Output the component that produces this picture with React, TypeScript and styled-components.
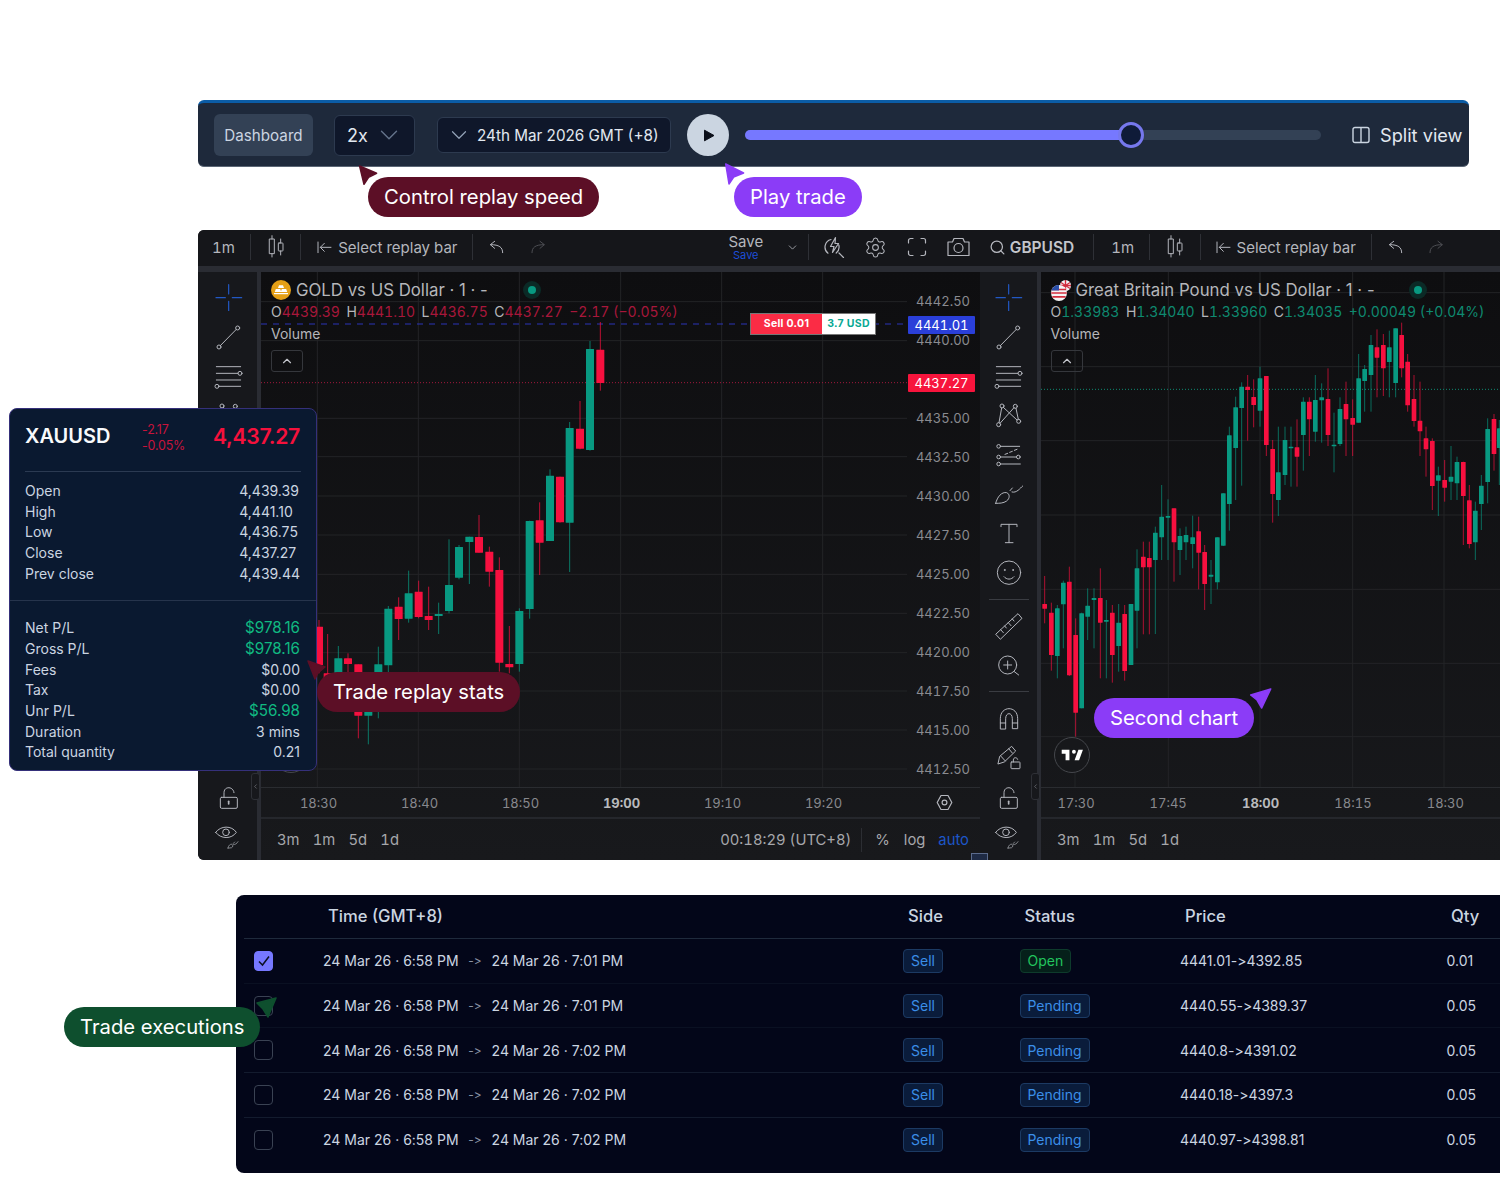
import React from "react";
import styled, { createGlobalStyle } from "styled-components";
import { ChevronDown, ChevronLeft, ChevronUp, Search, Settings } from "lucide-react";

const GlobalStyle = createGlobalStyle`
  html, body { margin: 0; padding: 0; background: #fff; }
  body { font-family: Inter, "Liberation Sans", sans-serif; }
  * { box-sizing: border-box; }
`;

const RED = "#f7103f";
const GREEN = "#089981";

type Candle = [number, number, number, number, number, "r" | "g"];

const GOLD: Candle[] = [
  [27, 870, 1030, 890, 1005, "r"], [53, 912, 1100, 1030, 1050, "r"], [85, 948, 1100, 985, 1060, "g"],
  [114, 970, 1100, 985, 1002, "r"], [145, 1003, 1225, 1003, 1157, "r"], [175, 1060, 1243, 1080, 1157, "g"],
  [205, 950, 1165, 1003, 1100, "g"], [235, 828, 1030, 836, 1006, "g"], [266, 802, 930, 830, 867, "r"],
  [296, 722, 878, 790, 866, "g"], [326, 752, 865, 785, 861, "r"], [356, 770, 900, 858, 870, "r"],
  [386, 818, 912, 852, 858, "g"], [417, 628, 850, 765, 843, "g"], [447, 645, 748, 651, 743, "g"],
  [478, 620, 762, 620, 636, "g"], [507, 555, 668, 621, 668, "r"], [538, 650, 770, 665, 725, "r"],
  [568, 682, 1025, 720, 998, "r"], [598, 888, 1030, 1002, 1012, "r"], [628, 835, 1025, 843, 1002, "g"],
  [659, 572, 866, 573, 837, "g"], [689, 517, 735, 571, 638, "r"], [720, 418, 633, 437, 633, "g"],
  [750, 440, 578, 440, 577, "r"], [779, 276, 726, 294, 578, "g"], [810, 213, 358, 296, 356, "r"],
  [840, 33, 362, 57, 360, "g"], [871, -24, 182, 59, 159, "r"],
];

const GBP: Candle[] = [
  [14, 768, 910, 852, 866, "r"], [34, 848, 1052, 878, 1005, "r"], [52, 855, 1075, 865, 1008, "g"],
  [70, 782, 985, 788, 853, "g"], [88, 740, 1068, 785, 1066, "r"], [107, 895, 1250, 945, 1178, "r"],
  [125, 878, 1165, 880, 1165, "g"], [143, 805, 960, 857, 890, "g"], [162, 805, 985, 834, 840, "g"],
  [181, 745, 1075, 834, 908, "r"], [199, 840, 1075, 900, 904, "g"], [217, 855, 1088, 878, 1005, "r"],
  [236, 852, 1055, 908, 978, "g"], [254, 855, 1082, 882, 1053, "r"], [273, 852, 1035, 852, 1035, "g"],
  [291, 688, 985, 745, 872, "g"], [310, 665, 943, 710, 742, "r"], [328, 665, 943, 714, 742, "r"],
  [346, 620, 942, 638, 720, "g"], [365, 495, 720, 590, 652, "g"], [384, 538, 720, 588, 592, "g"],
  [402, 565, 785, 565, 667, "r"], [420, 625, 765, 648, 690, "g"], [438, 620, 720, 645, 667, "g"],
  [458, 587, 745, 652, 672, "g"], [476, 590, 808, 634, 698, "r"], [494, 675, 870, 696, 792, "r"],
  [513, 720, 852, 764, 770, "g"], [532, 652, 808, 652, 787, "g"], [550, 520, 678, 520, 677, "g"],
  [568, 320, 632, 346, 552, "g"], [587, 230, 540, 262, 384, "g"], [605, 187, 497, 200, 264, "g"],
  [623, 165, 362, 200, 210, "r"], [641, 178, 322, 231, 255, "r"], [660, 140, 320, 175, 272, "g"],
  [679, 168, 408, 168, 375, "r"], [698, 360, 608, 387, 522, "r"], [715, 320, 588, 457, 540, "g"],
  [735, 320, 495, 360, 465, "g"], [753, 320, 500, 380, 384, "g"], [771, 298, 500, 382, 410, "r"],
  [790, 232, 452, 245, 345, "g"], [808, 232, 408, 245, 298, "r"], [826, 165, 365, 240, 335, "g"],
  [845, 190, 368, 232, 241, "g"], [864, 145, 378, 237, 345, "r"], [882, 278, 457, 374, 378, "g"],
  [900, 232, 378, 267, 372, "g"], [918, 185, 408, 252, 298, "r"], [938, 238, 408, 294, 314, "r"],
  [956, 102, 308, 175, 308, "g"], [974, 135, 275, 147, 183, "g"], [993, 45, 275, 75, 165, "g"],
  [1011, 28, 232, 82, 113, "r"], [1030, 42, 228, 75, 145, "r"], [1048, 32, 232, 82, 126, "g"],
  [1067, 25, 232, 25, 189, "g"], [1085, 8, 172, 45, 145, "r"], [1103, 102, 275, 125, 256, "r"],
  [1122, 165, 320, 237, 303, "r"], [1140, 185, 408, 302, 334, "r"], [1158, 320, 470, 355, 388, "r"],
  [1177, 355, 570, 363, 498, "r"], [1195, 440, 588, 466, 482, "g"], [1214, 420, 545, 480, 503, "r"],
  [1233, 378, 540, 470, 485, "g"], [1251, 410, 540, 426, 490, "g"], [1270, 425, 675, 426, 528, "r"],
  [1288, 495, 685, 541, 672, "r"], [1306, 545, 720, 572, 667, "g"], [1324, 465, 630, 497, 552, "g"],
  [1343, 295, 550, 327, 486, "g"], [1362, 282, 452, 297, 402, "r"], [1378, 300, 495, 325, 384, "g"],
];

const Page = styled.main`
  position: relative;
  width: 1500px;
  height: 1200px;
  padding-top: 100px;
  overflow: hidden;
  background: #fff;
`;

/* ---------- replay bar ---------- */
const ReplayBar = styled.section`
  display: flex;
  align-items: center;
  width: 1271px;
  height: 67px;
  margin-left: 198px;
  padding: 1px 0 0 16px;
  background: #1e293b;
  border-top: 3px solid #0b5ca6;
  border-bottom: 1px solid #5b6675;
  border-radius: 6px;
  color: #e2e8f0;
`;
const DashboardButton = styled.button`
  width: 99px;
  height: 42px;
  padding: 0;
  border: 0;
  border-radius: 6px;
  background: #334155;
  color: #cbd5e1;
  font: 400 15.2px Inter, sans-serif;
`;
const Picker = styled.div<{ $w: number; $h: number; $ml: number; $size: number; $pad: number; $gap: number }>`
  display: flex;
  align-items: center;
  width: ${(p) => p.$w}px;
  height: ${(p) => p.$h}px;
  margin-left: ${(p) => p.$ml}px;
  padding-left: ${(p) => p.$pad}px;
  gap: ${(p) => p.$gap}px;
  border: 1px solid #2d3a4f;
  border-radius: 6px;
  background: #0f172a;
  font-size: ${(p) => p.$size}px;
  white-space: nowrap;
`;
const PlayButton = styled.button`
  display: flex;
  align-items: center;
  justify-content: center;
  width: 42px;
  height: 42px;
  margin-left: 16px;
  padding: 0 0 0 1px;
  border: 0;
  border-radius: 50%;
  background: #cbd5e1;
`;
const SliderTrack = styled.div`
  position: relative;
  width: 576px;
  height: 10px;
  margin-left: 16px;
  border-radius: 5px;
  background: #334155;
`;
const SliderFill = styled.div`
  height: 100%;
  border-radius: 5px;
  background: #7678ff;
`;
const SliderThumb = styled.div`
  position: absolute;
  top: 50%;
  width: 26px;
  height: 26px;
  border: 3px solid #7678ed;
  border-radius: 50%;
  background: #0f1b38;
  transform: translate(-50%, -50%);
`;
const SplitView = styled.div`
  display: flex;
  align-items: center;
  gap: 10px;
  margin-left: 31px;
  font-size: 18.2px;
  white-space: nowrap;
`;

/* ---------- chart workspace ---------- */
const Workspace = styled.section`
  display: flex;
  flex-direction: column;
  width: 1340px;
  height: 630px;
  margin: 63px 0 0 198px;
  border-radius: 6px 0 0 6px;
  overflow: hidden;
  background: #2a2c33;
`;
const Toolbar = styled.div`
  display: flex;
  align-items: center;
  flex: none;
  height: 36px;
  margin-bottom: 6px;
  padding: 0 0 2px 14px;
  background: #15161a;
  color: #b4b6bd;
  font-size: 15px;
  font-variant-numeric: tabular-nums;
  white-space: nowrap;
`;
const ToolDivider = styled.span<{ $ml: number }>`
  flex: none;
  width: 1px;
  height: 26px;
  margin-left: ${(p) => p.$ml}px;
  background: #2e3036;
`;
const ToolSlot = styled.span<{ $ml?: number; $dim?: boolean }>`
  display: inline-flex;
  align-items: center;
  flex: none;
  margin-left: ${(p) => p.$ml ?? 0}px;
  opacity: ${(p) => (p.$dim ? 0.35 : 1)};
`;
const SaveStack = styled.span<{ $ml: number }>`
  display: flex;
  flex-direction: column;
  align-items: center;
  flex: none;
  width: 34px;
  margin-left: ${(p) => p.$ml}px;
  font-size: 15px;
  line-height: 16px;
`;
const SaveHint = styled.span`
  color: #1d4ed8;
  font-size: 11px;
  line-height: 11px;
`;
const Symbol = styled.strong`
  margin-left: 4px;
  color: #c4c6cc;
  font-size: 15.5px;
  font-weight: 600;
`;
const Panes = styled.div`
  display: flex;
  flex: 1;
  gap: 4px;
  min-height: 0;
`;
const PaneGroup = styled.div`
  display: flex;
  flex: none;
`;
const Sidebar = styled.nav<{ $w: number; $inset: number }>`
  position: relative;
  display: flex;
  flex-direction: column;
  align-items: center;
  flex: none;
  width: ${(p) => p.$w}px;
  padding: 6px 0 0 ${(p) => p.$inset}px;
  background: #17181c;
`;
const SideTool = styled.span`
  display: flex;
  align-items: center;
  justify-content: center;
  flex: none;
  width: 100%;
  height: 39.3px;
`;
const SideRule = styled.hr`
  flex: none;
  width: 40px;
  height: 1px;
  margin: 6.5px 0;
  border: 0;
  background: #3a3c42;
`;
const CollapseTab = styled.span`
  position: absolute;
  top: 501px;
  right: -3px;
  z-index: 2;
  display: flex;
  align-items: center;
  justify-content: center;
  width: 9px;
  height: 27px;
  border: 1px solid #2e3036;
  border-radius: 3px;
  background: #17181c;
  color: #8a8c92;
`;
const ToolSvg = styled.svg<{ $tint?: string; $thin?: boolean }>`
  flex: none;
  fill: none;
  stroke: ${(p) => p.$tint ?? "#b4b6bd"};
  stroke-width: ${(p) => (p.$thin ? 1.2 : 3)};
  stroke-linecap: round;
  stroke-linejoin: round;
`;
const ChartPane = styled.div<{ $w?: number }>`
  display: flex;
  flex-direction: column;
  position: relative;
  flex: ${(p) => (p.$w ? "none" : "1")};
  width: ${(p) => (p.$w ? `${p.$w}px` : "auto")};
  background: linear-gradient(180deg, #0e0e10 0%, #18191c 100%);
`;
const PlotRow = styled.div`
  display: flex;
  flex: none;
  height: 515px;
`;
const Plot = styled.div`
  position: relative;
  flex: 1;
  min-width: 0;
`;
const ChartSvg = styled.svg`
  position: absolute;
  inset: 0;
`;
const PriceAxis = styled.div`
  position: relative;
  flex: none;
  width: 73px;
  padding-top: 9.5px;
`;
const PriceTick = styled.div`
  height: 39px;
  padding-right: 10px;
  color: #8a8b90;
  font-size: 13px;
  font-variant-numeric: tabular-nums;
  line-height: 39px;
  text-align: right;
`;
const PriceTag = styled.span<{ $top: number; $bg: string }>`
  position: absolute;
  top: ${(p) => p.$top}px;
  left: 1px;
  width: 67px;
  height: 18.5px;
  border-radius: 1px;
  background: ${(p) => p.$bg};
  color: #fff;
  font-size: 13px;
  font-variant-numeric: tabular-nums;
  line-height: 18.5px;
  text-align: center;
`;
const Legend = styled.div<{ $left: number }>`
  position: absolute;
  top: 8px;
  left: ${(p) => p.$left}px;
  display: flex;
  flex-direction: column;
`;
const LegendTitle = styled.div`
  display: flex;
  align-items: center;
  height: 20px;
  gap: 4px;
  color: #b5b6ba;
  font-size: 16.8px;
  white-space: nowrap;
`;
const GoldName = styled.span`
  margin-left: 1px;
`;
const MarketDot = styled.span<{ $ml: number }>`
  display: flex;
  align-items: center;
  justify-content: center;
  width: 18px;
  height: 18px;
  margin-left: ${(p) => p.$ml}px;
  border-radius: 50%;
  background: #0b2a26;
  &::after {
    content: "";
    width: 8px;
    height: 8px;
    border-radius: 50%;
    background: #089981;
  }
`;
const Ohlc = styled.div`
  display: flex;
  gap: 6.5px;
  height: 16px;
  margin-top: 3.5px;
  color: #b5b6ba;
  font-size: 14px;
  font-variant-numeric: tabular-nums;
  line-height: 16px;
  white-space: nowrap;
`;
const OhlcValue = styled.span<{ $tone: string }>`
  color: ${(p) => p.$tone};
`;
const VolumeLabel = styled.div`
  height: 18px;
  margin-top: 5px;
  color: #b5b6ba;
  font-size: 14px;
  line-height: 18px;
`;
const CollapseButton = styled.button`
  display: flex;
  align-items: center;
  justify-content: center;
  width: 32px;
  height: 22px;
  margin-top: 7px;
  padding: 0;
  border: 1px solid #35373c;
  border-radius: 3px;
  background: transparent;
  color: #c4c6cc;
`;
const SellTag = styled.div`
  position: absolute;
  top: 41px;
  left: 489px;
  display: flex;
  width: 126px;
  height: 22px;
  border: 1px solid #777;
  font-size: 10.5px;
  font-weight: 700;
  line-height: 20px;
  letter-spacing: 0.3px;
  text-align: center;
`;
const SellPart = styled.span`
  width: 71px;
  background: #fb2c45;
  color: #fff;
`;
const SellValue = styled.span`
  flex: 1;
  background: #fff;
  color: #08a893;
`;
const TvBadge = styled.div<{ $left: number }>`
  position: absolute;
  top: 465px;
  left: ${(p) => p.$left}px;
  display: flex;
  align-items: center;
  justify-content: center;
  width: 36px;
  height: 36px;
  border: 1px solid #45474c;
  border-radius: 50%;
  background: #17181b;
`;
const TimeAxis = styled.div<{ $pad: number }>`
  display: flex;
  align-items: center;
  position: relative;
  flex: none;
  height: 30px;
  padding-left: ${(p) => p.$pad}px;
  border-top: 1px solid #2a2c30;
  overflow: hidden;
`;
const TimeTick = styled.span<{ $w: number; $bold?: boolean; $ml?: number }>`
  flex: none;
  width: ${(p) => p.$w}px;
  margin-left: ${(p) => p.$ml ?? 0}px;
  color: ${(p) => (p.$bold ? "#b9babd" : "#88898e")};
  font-size: 13px;
  font-variant-numeric: tabular-nums;
  font-weight: ${(p) => (p.$bold ? 700 : 400)};
  text-align: center;
`;
const AxisGear = styled.span`
  position: absolute;
  right: 27px;
  display: flex;
`;
const RangeBar = styled.div`
  position: relative;
  display: flex;
  align-items: center;
  flex: 1;
  padding-left: 16px;
  border-top: 2px solid #25272c;
  color: #a6a7ab;
  font-size: 14.8px;
  font-variant-numeric: tabular-nums;
  white-space: nowrap;
`;
const Ranges = styled.div`
  display: flex;
  gap: 13.2px;
`;
const RangeRight = styled.div`
  display: flex;
  align-items: center;
  margin-left: auto;
  padding-right: 11px;
`;
const RangeRule = styled.span`
  width: 1px;
  height: 24px;
  margin: 0 13px 0 10px;
  background: #2c2e33;
`;
const RangeLink = styled.span<{ $blue?: boolean; $ml?: number }>`
  margin-left: ${(p) => p.$ml ?? 0}px;
  color: ${(p) => (p.$blue ? "#1d56c8" : "#a6a7ab")};
`;
const CornerChip = styled.span`
  position: absolute;
  right: -8px;
  bottom: 0;
  z-index: 2;
  width: 17px;
  height: 7px;
  border: 1px solid #5b6b8c;
  border-bottom: 0;
  background: #1e2a44;
`;

/* ---------- stats panel ---------- */
const StatsPanel = styled.aside`
  position: absolute;
  top: 408px;
  left: 9px;
  width: 308px;
  height: 363px;
  border: 1px solid #35307a;
  border-radius: 8px;
  background: #0a1930;
  color: #cbd5e1;
  font-size: 14px;
`;
const StatsHead = styled.header`
  display: flex;
  align-items: center;
  height: 62px;
  padding: 0 16px 8px 15px;
`;
const StatsSymbol = styled.strong`
  width: 117px;
  color: #f8fafc;
  font-size: 20px;
  font-weight: 600;
`;
const StatsChange = styled.span`
  margin-top: 4px;
  color: #c8143c;
  font-size: 12.5px;
  line-height: 16px;
  letter-spacing: -0.2px;
`;
const StatsPrice = styled.strong`
  margin-left: auto;
  color: #f5113c;
  font-size: 21.2px;
  font-weight: 600;
  letter-spacing: -0.3px;
`;
const HeadRule = styled.hr`
  height: 1px;
  margin: 0 15px;
  border: 0;
  background: #2b3a52;
`;
const FullRule = styled.hr`
  height: 1px;
  margin: 0;
  border: 0;
  background: #26344c;
`;
const StatsGroup = styled.dl<{ $top: number; $bottom: number }>`
  display: grid;
  grid-template-columns: 1fr auto;
  grid-auto-rows: 20.7px;
  align-items: center;
  margin: 0;
  padding: ${(p) => p.$top}px 16px ${(p) => p.$bottom}px 15px;
`;
const StatsLabel = styled.dt``;
const StatsValue = styled.dd<{ $right?: boolean; $pos?: boolean }>`
  margin: 0;
  color: ${(p) => (p.$pos ? "#10b981" : "#cbd5e1")};
  font-size: ${(p) => (p.$pos ? 15.2 : 14)}px;
  text-align: ${(p) => (p.$right ? "right" : "left")};
`;

/* ---------- table ---------- */
const TradeTable = styled.section`
  width: 1300px;
  height: 278px;
  margin: 35px 0 0 236px;
  padding-left: 8px;
  border-radius: 8px;
  background: #030619;
  color: #cbd5e1;
`;
const HeaderRow = styled.div`
  display: grid;
  grid-template-columns: 79px 580px 116.5px 160.5px 266px 1fr;
  align-items: center;
  height: 44px;
  padding-bottom: 2px;
  border-bottom: 1px solid #1f2a3c;
  font-size: 16.6px;
  font-weight: 500;
`;
const HeaderCell = styled.span`
  padding-left: 5px;
`;
const TradeRow = styled.div<{ $line: string }>`
  display: grid;
  grid-template-columns: 79px 580px 116.5px 160.5px 266.5px 1fr;
  align-items: center;
  height: 44.7px;
  border-bottom: 1px solid ${(p) => p.$line};
  font-size: 14px;
  font-feature-settings: "calt" 0;
`;
const CheckBox = styled.span<{ $on?: boolean }>`
  display: flex;
  align-items: center;
  justify-content: center;
  width: 19px;
  height: 20px;
  margin-left: 10px;
  border: 1px solid ${(p) => (p.$on ? "#7678ff" : "#3a4253")};
  border-radius: 4px;
  background: ${(p) => (p.$on ? "#7678ff" : "transparent")};
`;
const TimeCell = styled.span`
  display: flex;
  align-items: center;
  white-space: nowrap;
`;
const TimeArrow = styled.span`
  width: 33px;
  color: #8a93a5;
  font-size: 12px;
  text-align: center;
`;
const Badge = styled.span<{ $tone: "blue" | "green" }>`
  display: inline-flex;
  align-items: center;
  justify-self: start;
  height: 24px;
  padding: 0 7px;
  border: 1px solid ${(p) => (p.$tone === "green" ? "#0e3b2c" : "#1c3a63")};
  border-radius: 4px;
  background: ${(p) => (p.$tone === "green" ? "#05201a" : "#0a1c3b")};
  color: ${(p) => (p.$tone === "green" ? "#22c55e" : "#3b8ee8")};
`;

/* ---------- callouts ---------- */
const Callout = styled.div<{ $x: number; $y: number; $bg: string }>`
  position: absolute;
  top: ${(p) => p.$y}px;
  left: ${(p) => p.$x}px;
  z-index: 5;
  height: 40px;
  padding: 0 16px;
  border-radius: 20px;
  background: ${(p) => p.$bg};
  color: #fff;
  font-size: 20.25px;
  line-height: 40px;
  white-space: nowrap;
`;
const PointerSvg = styled.svg<{ $x: number; $y: number }>`
  position: absolute;
  top: ${(p) => p.$y}px;
  left: ${(p) => p.$x}px;
  z-index: 5;
`;

const Pointer = ({ x, y, color, pts }: { x: number; y: number; color: string; pts: string }) => (
  <PointerSvg $x={x} $y={y} width={26} height={26} viewBox="0 0 26 26">
    <polygon points={pts} fill={color} stroke={color} strokeWidth={1.5} strokeLinejoin="round" />
  </PointerSvg>
);

const ZIcon = ({ b, c, children }: { b: [number, number, number, number]; c?: string; children: React.ReactNode }) => (
  <ToolSvg viewBox={b.join(" ")} width={b[2] / 3} height={b[3] / 3} $tint={c}>
    {children}
  </ToolSvg>
);

const CandleIcon = () => (
  <ZIcon b={[205, 22, 55, 72]}>
    <rect x={213} y={34} width={14} height={44} />
    <path d="M220 24v10M220 78v10" />
    <rect x={239} y={46} width={14} height={24} rx={2} />
    <path d="M246 34v12M246 70v12" />
  </ZIcon>
);
const ReplayIcon = () => (
  <ZIcon b={[352, 34, 54, 44]}>
    <path d="M361 40v32M400 56h-32M380 44l-12 12 12 12" />
  </ZIcon>
);
const UndoIcon = ({ flip }: { flip?: boolean }) => (
  <ZIcon b={[872, 34, 50, 44]}>
    <path transform={flip ? "matrix(-1 0 0 1 1794 0)" : undefined} d="M916 72c0-16-10-24-36-24M892 38l-13 10 13 11" />
  </ZIcon>
);

const ChartTools = ({ first, replay }: { first: number; replay: number }) => (
  <>
    {first ? <ToolDivider $ml={first} /> : null}
    <ToolSlot $ml={first ? 17 : 0}>1m</ToolSlot>
    <ToolDivider $ml={15} />
    <ToolSlot $ml={16}>
      <CandleIcon />
    </ToolSlot>
    <ToolDivider $ml={15} />
    <ToolSlot $ml={replay}>
      <ReplayIcon />
    </ToolSlot>
    <ToolSlot $ml={5}>Select replay bar</ToolSlot>
    <ToolDivider $ml={15} />
    <ToolSlot $ml={15}>
      <UndoIcon />
    </ToolSlot>
    <ToolSlot $ml={25} $dim>
      <UndoIcon flip />
    </ToolSlot>
  </>
);

const PlainIcon = ({ w, h, vb, children }: { w: number; h: number; vb: string; children: React.ReactNode }) => (
  <ToolSvg viewBox={vb} width={w} height={h} $thin>
    {children}
  </ToolSvg>
);

const LockIcon = () => (
  <ZIcon b={[112, 1155, 66, 76]}>
    <rect x={119} y={1192} width={51} height={33} rx={4} />
    <path d="M130 1192v-14c0-20 28-20 30 0" />
    <path d="M144 1204v8" strokeWidth={5} />
  </ZIcon>
);
const EyeIcon = () => (
  <ZIcon b={[105, 1275, 85, 78]}>
    <path d="M110 1300c15-21 48-21 62 0-14 21-47 21-62 0Z" />
    <circle cx={141} cy={1300} r={10} />
    <path d="M147 1347c1-7 7-13 12-11 4 2 3 8-1 10-3 1-7 1-11 1ZM163 1333l4-4M163 1336c6 2 10-2 14-8" strokeWidth={2} />
  </ZIcon>
);

const ToolColumn = ({ w, inset }: { w: number; inset: number }) => (
  <Sidebar $w={w} $inset={inset}>
    <SideTool>
      <ZIcon b={[52, 170, 84, 82]} c="#2258c4">
        <path d="M93 172v28M93 222v28M55 211h28M104 211h28" strokeWidth={3.6} />
      </ZIcon>
    </SideTool>
    <SideTool>
      <ZIcon b={[52, 286, 80, 80]}>
        <path d="M68 351l48-49" />
        <circle cx={64} cy={355} r={6} />
        <circle cx={120} cy={298} r={6} />
      </ZIcon>
    </SideTool>
    <SideTool>
      <ZIcon b={[45, 405, 92, 76]}>
        <path d="M55 413h73M55 433h65M55 453h73M63 472h65" />
        <circle cx={126} cy={433} r={6} />
        <circle cx={57} cy={472} r={6} />
      </ZIcon>
    </SideTool>
    <SideTool>
      <ZIcon b={[105, 7, 80, 80]}>
        <path d="M130 23l41 38M162 24l-42 47M125 25l-8 44M168 26l7 33" />
        <circle cx={126} cy={19} r={6} />
        <circle cx={166} cy={20} r={6} />
        <circle cx={116} cy={75} r={6} />
        <circle cx={176} cy={65} r={6} />
      </ZIcon>
    </SideTool>
    <SideTool>
      <ZIcon b={[102, 130, 84, 72]}>
        <path d="M119 140h57M119 172h47M119 193h59" />
        <path d="M132 164l8-3M146 158l8-3M160 152l8-3" />
        <circle cx={113} cy={140} r={5.5} />
        <circle cx={113} cy={172} r={5.5} />
        <circle cx={113} cy={193} r={5.5} />
        <circle cx={172} cy={172} r={5.5} />
      </ZIcon>
    </SideTool>
    <SideTool>
      <ZIcon b={[102, 252, 90, 62]}>
        <path d="M107 310c5-20 18-35 33-32 10 4 10 17 0 25-10 7-22 7-33 7ZM150 272l7-8M156 276c14 4 24-11 32-18" />
      </ZIcon>
    </SideTool>
    <SideTool>
      <ZIcon b={[116, 368, 60, 68]}>
        <path d="M122 382v-7h48v7M146 375v55M135 430h23" />
      </ZIcon>
    </SideTool>
    <SideTool>
      <ZIcon b={[106, 480, 78, 78]}>
        <circle cx={145} cy={518} r={35} />
        <circle cx={132} cy={510} r={1.5} />
        <circle cx={157} cy={510} r={1.5} />
        <path d="M130 530c8 10 22 10 30 0" />
      </ZIcon>
    </SideTool>
    <SideRule />
    <SideTool>
      <ZIcon b={[100, 636, 90, 86]}>
        <path d="M106 702l66-61 12 14-64 62ZM120 689l8 9M132 678l5 6M143 668l8 9M155 657l5 6" />
      </ZIcon>
    </SideTool>
    <SideTool>
      <ZIcon b={[108, 760, 70, 68]}>
        <circle cx={140} cy={793} r={27} />
        <path d="M160 813l13 10M140 781v24M128 793h24" />
      </ZIcon>
    </SideTool>
    <SideRule />
    <SideTool>
      <ZIcon b={[112, 920, 66, 70]}>
        <path d="M119 985v-30c0-40 52-40 52 0v30h-16v-30c0-20-20-20-20 0v30ZM119 968h16M155 968h16" />
      </ZIcon>
    </SideTool>
    <SideTool>
      <ZIcon b={[104, 1034, 78, 76]}>
        <path d="M110 1090l5-22 36-30 12 14-33 32ZM119 1068l13 14M142 1045l11 13" />
        <rect x={149} y={1085} width={27} height={20} rx={2} />
        <path d="M156 1085v-6c0-9 12-9 13-2" />
      </ZIcon>
    </SideTool>
    <SideTool>
      <LockIcon />
    </SideTool>
    <SideTool>
      <EyeIcon />
    </SideTool>
    <CollapseTab>
      <ChevronLeft size={9} strokeWidth={2} />
    </CollapseTab>
  </Sidebar>
);

const Candles = ({ data, body, wick }: { data: Candle[]; body: number; wick: number }) => (
  <>
    {data.map(([x, wt, wb, bt, bb, c]) => {
      const color = c === "r" ? RED : GREEN;
      return (
        <g key={x}>
          <line x1={x} x2={x} y1={wt} y2={wb} stroke={color} strokeWidth={wick} opacity={0.75} />
          <rect x={x - body / 2} y={bt} width={body} height={Math.max(bb - bt, 5)} fill={color} rx={1} />
        </g>
      );
    })}
  </>
);

const GoldChart = () => (
  <ChartSvg viewBox="-147 -174 1938 1545" width={646} height={515}>
    {[32, 265, 380, 498, 615, 733, 850, 968, 1083, 1200, 1317, -85].map((y) => (
      <line key={y} x1={-147} x2={1791} y1={y} y2={y} stroke="#232427" strokeWidth={3} />
    ))}
    {[22, 325, 628, 932, 1235, 1538].map((x) => (
      <line key={x} x1={x} x2={x} y1={-174} y2={1371} stroke="#232427" strokeWidth={3} />
    ))}
    <line x1={-147} x2={1791} y1={-18} y2={-18} stroke="#2a34b8" strokeWidth={3} strokeDasharray="18 18" />
    <line x1={-147} x2={1791} y1={158} y2={158} stroke="#a0183c" strokeWidth={3} strokeDasharray="3 6" />
    <Candles data={GOLD} body={24} wick={3} />
  </ChartSvg>
);

const GbpChart = () => (
  <ChartSvg viewBox="3 -144 1380 1545" width={460} height={515}>
    {[-82, 140, 362, 585, 808, 1030, 1250].map((y) => (
      <line key={y} x1={3} x2={1383} y1={y} y2={y} stroke="#232427" strokeWidth={3} />
    ))}
    {[105, 385, 660, 938, 1212].map((x) => (
      <line key={x} x1={x} x2={x} y1={-144} y2={1401} stroke="#232427" strokeWidth={3} />
    ))}
    <line x1={3} x2={1383} y1={208} y2={208} stroke="#0f8a72" strokeWidth={3} strokeDasharray="3 6" />
    <Candles data={GBP} body={14} wick={2.7} />
  </ChartSvg>
);

const GoldMark = () => (
  <svg width={20} height={20} viewBox="0 0 20 20">
    <circle cx={10} cy={10} r={10} fill="#e5a016" />
    <path d="M8 5.2h4l1 2.8H7ZM4.8 9h4.4l1 3H3.8ZM10.8 9h4.4l1 3h-6.4Z" fill="#fff" />
    <rect x={3} y={13} width={14} height={1.2} fill="#fff" />
  </svg>
);
const FlagMark = () => (
  <svg width={21} height={21} viewBox="0 0 21 21">
    <circle cx={14.5} cy={5.5} r={5.5} fill="#f3f4f6" />
    <path d="M10 2.5l9 6M19 2.5l-9 6" stroke="#cf2b3c" strokeWidth={1.2} />
    <path d="M14.5 0v11M9 5.5h11" stroke="#cf2b3c" strokeWidth={1.4} />
    <circle cx={8} cy={13} r={8} fill="#f4f4f5" />
    <path d="M1 9.5h14M.2 13h15.6M1.4 16.8h13.2" stroke="#d22f3f" strokeWidth={1.7} />
    <path d="M8 5a8 8 0 0 0-7.5 5.5H8Z" fill="#2a4ea8" />
  </svg>
);
const TvLogo = () => (
  <svg width={24} height={18} viewBox="0 0 36 28" fill="#fff">
    <path d="M14 6H2v6h6v10h6V6Zm8 16 6-16h7l-6 16h-7Zm-1-10a3 3 0 1 0 0-6 3 3 0 0 0 0 6Z" />
  </svg>
);

/* 4437.50 sits under the live price tag in the reference, so its row stays empty. */
const PRICES = ["4442.50", "4440.00", "", "4435.00", "4432.50", "4430.00", "4427.50", "4425.00", "4422.50", "4420.00", "4417.50", "4415.00", "4412.50"];
const STATS_A: [string, string][] = [
  ["Open", "4,439.39"], ["High", "4,441.10"], ["Low", "4,436.75"], ["Close", "4,437.27"], ["Prev close", "4,439.44"],
];
const STATS_B: [string, string, boolean][] = [
  ["Net P/L", "$978.16", true], ["Gross P/L", "$978.16", true], ["Fees", "$0.00", false], ["Tax", "$0.00", false],
  ["Unr P/L", "$56.98", true], ["Duration", "3 mins", false], ["Total quantity", "0.21", false],
];
const TRADES: [string, string, string, string, string][] = [
  ["7:01 PM", "Open", "4441.01->4392.85", "0.01", "#0a1022"],
  ["7:01 PM", "Pending", "4440.55->4389.37", "0.05", "#0a1022"],
  ["7:02 PM", "Pending", "4440.8->4391.02", "0.05", "#131b2e"],
  ["7:02 PM", "Pending", "4440.18->4397.3", "0.05", "#131b2e"],
  ["7:02 PM", "Pending", "4440.97->4398.81", "0.05", "transparent"],
];
const REPLAY_PROGRESS = 67.1;

export default function App() {
  return (
    <Page>
      <GlobalStyle />
      <ReplayBar>
        <DashboardButton>Dashboard</DashboardButton>
        <Picker $w={81} $h={41} $ml={21} $size={18} $pad={12} $gap={6}>
          2x
          <ChevronDown size={30} color="#64748b" strokeWidth={1.1} />
        </Picker>
        <Picker $w={234} $h={36} $ml={22} $size={15.25} $pad={8} $gap={5}>
          <ChevronDown size={26} color="#94a3b8" strokeWidth={1.1} />
          24th Mar 2026 GMT (+8)
        </Picker>
        <PlayButton aria-label="Play">
          <svg width={12} height={13} viewBox="0 0 12 13">
            <path d="M1.5 1.2 11 6.5 1.5 11.8Z" fill="#0b0f19" stroke="#0b0f19" strokeLinejoin="round" />
          </svg>
        </PlayButton>
        <SliderTrack>
          <SliderFill style={{ width: `${REPLAY_PROGRESS}%` }} />
          <SliderThumb style={{ left: `${REPLAY_PROGRESS}%` }} />
        </SliderTrack>
        <SplitView>
          <svg width={18} height={18} viewBox="0 0 18 18" fill="none" stroke="#cbd5e1" strokeWidth={1.4}>
            <rect x={1} y={1.5} width={16} height={15} rx={2} />
            <path d="M9 1.5v15" />
          </svg>
          Split view
        </SplitView>
      </ReplayBar>

      <Workspace>
        <Toolbar>
          <ChartTools first={0} replay={14} />
          <SaveStack $ml={182}>
            Save
            <SaveHint>Save</SaveHint>
          </SaveStack>
          <ToolSlot $ml={23}>
            <ChevronDown size={13} strokeWidth={1.5} />
          </ToolSlot>
          <ToolDivider $ml={9} />
          <ToolSlot $ml={14}>
            <PlainIcon w={22} h={22} vb="0 0 22 22">
              <path d="M8 3.5A7.8 7.8 0 0 0 5 17.2M15.8 9a7.8 7.8 0 0 1-2.6 8M16 17l4.5 4.5M12.5 1.5 7.5 10.5h3.5l-1.5 6 6-9h-3.5Z" />
            </PlainIcon>
          </ToolSlot>
          <ToolSlot $ml={19}>
            <Settings size={23} strokeWidth={1.1} />
          </ToolSlot>
          <ToolSlot $ml={20}>
            <PlainIcon w={20} h={20} vb="0 0 20 20">
              <path d="M1.5 6V3.5a2 2 0 0 1 2-2H6M14 1.5h2.5a2 2 0 0 1 2 2V6M18.5 14v2.5a2 2 0 0 1-2 2H14M6 18.5H3.5a2 2 0 0 1-2-2V14" />
            </PlainIcon>
          </ToolSlot>
          <ToolSlot $ml={20}>
            <PlainIcon w={23} h={20} vb="0 0 23 20">
              <path d="M1 5h4.5l1.5-3.5h9L17.5 5H22v13.5H1Z" />
              <circle cx={11.5} cy={11} r={4.5} />
            </PlainIcon>
          </ToolSlot>
          <ToolSlot $ml={19}>
            <Search size={17} strokeWidth={1.8} />
          </ToolSlot>
          <Symbol>GBPUSD</Symbol>
          <ChartTools first={19} replay={13} />
        </Toolbar>

        <Panes>
          <ToolColumn w={59} inset={2} />
          <PaneGroup>
            <ChartPane $w={719}>
              <PlotRow>
                <Plot>
                  <GoldChart />
                  <Legend $left={10}>
                    <LegendTitle>
                      <GoldMark />
                      <GoldName>GOLD vs US Dollar · 1 · -</GoldName>
                      <MarketDot $ml={31} />
                    </LegendTitle>
                    <Ohlc>
                      <span>O<OhlcValue $tone="#a8173b">4439.39</OhlcValue></span>
                      <span>H<OhlcValue $tone="#a8173b">4441.10</OhlcValue></span>
                      <span>L<OhlcValue $tone="#a8173b">4436.75</OhlcValue></span>
                      <span>C<OhlcValue $tone="#a8173b">4437.27</OhlcValue></span>
                      <OhlcValue $tone="#a8173b">−2.17 (−0.05%)</OhlcValue>
                    </Ohlc>
                    <VolumeLabel>Volume</VolumeLabel>
                    <CollapseButton aria-label="Collapse">
                      <ChevronUp size={14} strokeWidth={2} />
                    </CollapseButton>
                  </Legend>
                  <SellTag>
                    <SellPart>Sell 0.01</SellPart>
                    <SellValue>3.7 USD</SellValue>
                  </SellTag>
                  <TvBadge $left={12}>
                    <TvLogo />
                  </TvBadge>
                </Plot>
                <PriceAxis>
                  {PRICES.map((p, i) => (
                    <PriceTick key={i}>{p}</PriceTick>
                  ))}
                  <PriceTag $top={43.5} $bg="#2a3fd9">4441.01</PriceTag>
                  <PriceTag $top={101.7} $bg="#f7143c">4437.27</PriceTag>
                </PriceAxis>
              </PlotRow>
              <TimeAxis $pad={7}>
                {["18:30", "18:40", "18:50", "19:00", "19:10", "19:20"].map((t) => (
                  <TimeTick key={t} $w={101} $bold={t === "19:00"}>
                    {t}
                  </TimeTick>
                ))}
                <AxisGear>
                  <PlainIcon w={17} h={17} vb="0 0 17 17">
                    <path d="M5 1.5h7L15.8 8.5 12 15.5H5L1.2 8.5Z" />
                    <circle cx={8.5} cy={8.5} r={2.4} />
                  </PlainIcon>
                </AxisGear>
              </TimeAxis>
              <RangeBar>
                <Ranges>
                  <span>3m</span>
                  <span>1m</span>
                  <span>5d</span>
                  <span>1d</span>
                </Ranges>
                <RangeRight>
                  00:18:29 (UTC+8)
                  <RangeRule />
                  <RangeLink>%</RangeLink>
                  <RangeLink $ml={14}>log</RangeLink>
                  <RangeLink $ml={13} $blue>auto</RangeLink>
                </RangeRight>
                <CornerChip />
              </RangeBar>
            </ChartPane>
            <ToolColumn w={57} inset={0} />
          </PaneGroup>
          <ChartPane>
            <PlotRow>
              <Plot>
                <GbpChart />
                <Legend $left={9.5}>
                  <LegendTitle>
                    <FlagMark />
                    Great Britain Pound vs US Dollar · 1 · -
                    <MarketDot $ml={30} />
                  </LegendTitle>
                  <Ohlc>
                    <span>O<OhlcValue $tone="#0e8a70">1.33983</OhlcValue></span>
                    <span>H<OhlcValue $tone="#0e8a70">1.34040</OhlcValue></span>
                    <span>L<OhlcValue $tone="#0e8a70">1.33960</OhlcValue></span>
                    <span>C<OhlcValue $tone="#0e8a70">1.34035</OhlcValue></span>
                    <OhlcValue $tone="#0e8a70">+0.00049 (+0.04%)</OhlcValue>
                  </Ohlc>
                  <VolumeLabel>Volume</VolumeLabel>
                  <CollapseButton aria-label="Collapse">
                    <ChevronUp size={14} strokeWidth={2} />
                  </CollapseButton>
                </Legend>
                <TvBadge $left={13}>
                  <TvLogo />
                </TvBadge>
              </Plot>
            </PlotRow>
            <TimeAxis $pad={0}>
              <TimeTick $w={80} $ml={-5}>17:30</TimeTick>
              {["17:45", "18:00", "18:15", "18:30"].map((t, i) => (
                <TimeTick key={t} $w={92.4} $bold={i === 1} $ml={i === 0 ? 6 : 0}>
                  {t}
                </TimeTick>
              ))}
            </TimeAxis>
            <RangeBar>
              <Ranges>
                <span>3m</span>
                <span>1m</span>
                <span>5d</span>
                <span>1d</span>
              </Ranges>
            </RangeBar>
          </ChartPane>
        </Panes>
      </Workspace>

      <TradeTable>
        <HeaderRow>
          <span />
          <HeaderCell>Time (GMT+8)</HeaderCell>
          <HeaderCell>Side</HeaderCell>
          <HeaderCell>Status</HeaderCell>
          <HeaderCell>Price</HeaderCell>
          <HeaderCell>Qty</HeaderCell>
        </HeaderRow>
        {TRADES.map(([end, status, price, qty, line], i) => (
          <TradeRow key={price} $line={line}>
            <CheckBox $on={i === 0}>
              {i === 0 ? (
                <svg width={14} height={14} viewBox="0 0 14 14" fill="none" stroke="#0b1024" strokeWidth={1.5}>
                  <path d="M2 7.5 5.5 11 12 2.5" />
                </svg>
              ) : null}
            </CheckBox>
            <TimeCell>
              24 Mar 26 · 6:58 PM
              <TimeArrow>-&gt;</TimeArrow>
              24 Mar 26 · {end}
            </TimeCell>
            <Badge $tone="blue">Sell</Badge>
            <Badge $tone={status === "Open" ? "green" : "blue"}>{status}</Badge>
            <span>{price}</span>
            <span>{qty}</span>
          </TradeRow>
        ))}
      </TradeTable>

      <StatsPanel>
        <StatsHead>
          <StatsSymbol>XAUUSD</StatsSymbol>
          <StatsChange>
            -2.17
            <br />
            -0.05%
          </StatsChange>
          <StatsPrice>4,437.27</StatsPrice>
        </StatsHead>
        <HeadRule />
        <StatsGroup $top={8} $bottom={17}>
          {STATS_A.map(([k, v]) => (
            <React.Fragment key={k}>
              <StatsLabel>{k}</StatsLabel>
              <StatsValue>{v}</StatsValue>
            </React.Fragment>
          ))}
        </StatsGroup>
        <FullRule />
        <StatsGroup $top={16} $bottom={0}>
          {STATS_B.map(([k, v, pos]) => (
            <React.Fragment key={k}>
              <StatsLabel>{k}</StatsLabel>
              <StatsValue $right $pos={pos}>{v}</StatsValue>
            </React.Fragment>
          ))}
        </StatsGroup>
      </StatsPanel>

      <Pointer x={356} y={163} color="#5c0f26" pts="3.6,3 20.6,10.3 12.6,14.3 8,21.3" />
      <Callout $x={368} $y={177} $bg="#5c0f26">Control replay speed</Callout>
      <Pointer x={723} y={161} color="#8b3cf7" pts="2.7,3 20.6,12 10.7,16 6,23" />
      <Callout $x={734} $y={177} $bg="#8b3cf7">Play trade</Callout>
      <Pointer x={305} y={658} color="#5c0f26" pts="3,3 20,9 13,15 10,21" />
      <Callout $x={317} $y={672} $bg="#5c0f26">Trade replay stats</Callout>
      <Pointer x={1248} y={686} color="#8b3cf7" pts="22.7,3 2.7,9 9,14 13.7,22" />
      <Callout $x={1094} $y={698} $bg="#8b3cf7">Second chart</Callout>
      <Pointer x={254} y={995} color="#0e4f2e" pts="22,3 3,8 9,14 14,22" />
      <Callout $x={64} $y={1007} $bg="#0e4f2e">Trade executions</Callout>
    </Page>
  );
}
